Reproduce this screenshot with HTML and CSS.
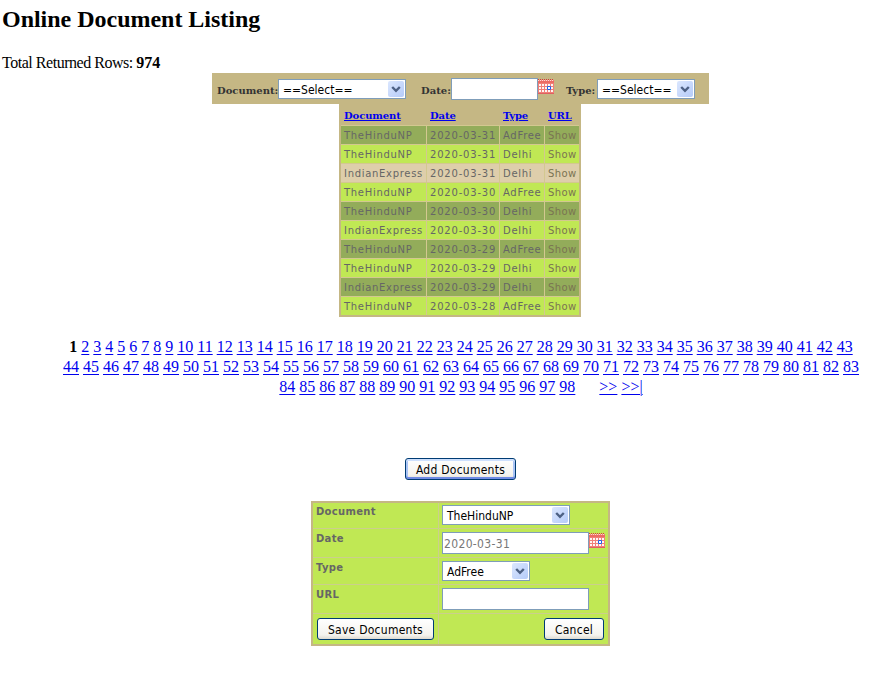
FILE: index.html
```html
<!DOCTYPE html>
<html lang="en">
<head>
<meta charset="utf-8">
<title>Online Document Listing</title>
<link rel="stylesheet" href="styles.css">
</head>
<body>
<svg width="0" height="0" class="defs" aria-hidden="true">
  <symbol id="cal" viewBox="0 0 16 16">
    <path d="M0 1h16v14H0z" fill="#f08078"/>
    <path d="M0 .5h16" stroke="#d83838" stroke-dasharray="1 1"/>
    <path d="M0 1.5h16" stroke="#ffd8d4" stroke-dasharray="1 1"/>
    <path d="M0 2h16v2H0z" fill="#ec6c64"/>
    <path d="M1 5h2v2H1zM4 5h2v2H4zM7 5h2v2H7zM10 5h2v2h-2zM13 5h2v2h-2zM1 8h2v2H1zM4 8h2v2H4zM7 8h2v2H7zM13 8h2v2h-2zM1 11h2v2H1zM4 11h2v2H4zM7 11h2v2H7zM10 11h2v2h-2zM13 11h2v2h-2z" fill="#fff6f4"/>
    <path d="M0 14h16v1H0z" fill="#e06060"/>
    <path d="M9.5 7.5h3v3h-3z" fill="#fff" stroke="#1c60e8"/>
  </symbol>
  <symbol id="arrow" viewBox="0 0 16 16">
    <path d="M4.2 6l3.8 3.8L11.8 6" fill="none" stroke="#4d6185" stroke-width="2.4"/>
  </symbol>
</svg>
<h1>Online Document Listing</h1>
<p class="total">Total Returned Rows: <b>974</b></p>

<div class="filter">
  <span class="flabel l1">Document:</span>
  <div class="select w128"><span>==Select==</span><i><svg><use href="#arrow"/></svg></i></div>
  <span class="flabel l2">Date:</span>
  <div class="input w87"></div><svg class="cal"><use href="#cal"/></svg>
  <span class="flabel l3">Type:</span>
  <div class="select w98"><span>==Select==</span><i><svg><use href="#arrow"/></svg></i></div>
</div>

<div class="list" id="list">
  <div class="head"><a>Document</a></div><div class="head"><a>Date</a></div><div class="head"><a>Type</a></div><div class="head"><a>URL</a></div>
</div>

<div class="pages" id="pages"></div>

<div class="add"><div class="button focus w111">Add Documents</div></div>

<div class="form">
  <div class="flab">Document</div>
  <div class="field"><div class="select w128"><span class="doc">TheHinduNP</span><i><svg><use href="#arrow"/></svg></i></div></div>
  <div class="flab low">Date</div>
  <div class="field"><div class="input w147">2020-03-31</div><svg class="cal"><use href="#cal"/></svg></div>
  <div class="flab low">Type</div>
  <div class="field"><div class="select w88"><span class="doc">AdFree</span><i><svg><use href="#arrow"/></svg></i></div></div>
  <div class="flab low">URL</div>
  <div class="field"><div class="input w147"></div></div>
  <div class="act"><div class="button w117">Save Documents</div></div>
  <div class="act end"><div class="button w60">Cancel</div></div>
</div>
<script src="app.js"></script>
</body>
</html>
```
FILE: styles.css
```css
* { box-sizing: border-box; }
body { margin: 0; background: #fff; color: #000; font-family: "Liberation Serif", serif; font-size: 16px; overflow: hidden; }
.defs { display: block; height: 0; }
h1 { margin: 0; padding: 5px 0 0 2px; font-size: 24px; line-height: 28px; height: 53px; letter-spacing: -0.02px; }
.total { margin: 0; padding-left: 2px; height: 20px; line-height: 20px; letter-spacing: -0.47px; }
.total b { letter-spacing: 0; }
a { color: #00e; text-decoration: underline; }

.filter { display: flex; align-items: flex-start; margin-left: 212px; width: 497px; height: 31px; padding-top: 5px; background: #c5b784; }
.flabel { font: bold 10px/12px "DejaVu Serif", serif; color: #333; margin-top: 7px; white-space: nowrap; }
.l1 { width: 66px; padding-left: 5px; }
.l2 { width: 45px; padding-left: 15px; }
.l3 { width: 43px; padding-left: 12px; }
.filter .select { margin-top: 1px; }

.select, .input { background: #fff; border: 1px solid #7f9db9; font: 12px/18px "DejaVu Sans Condensed", "DejaVu Sans", sans-serif; white-space: nowrap; }
.select { height: 20px; display: flex; justify-content: space-between; padding: 1px; line-height: 18px; }
.select span { padding-left: 3px; }
.select i { width: 16px; height: 16px; border-radius: 2px; background: linear-gradient(135deg, #dbe7fe, #b5cbf9); }
.select svg { display: block; width: 16px; height: 16px; }
.input { height: 22px; padding: 2px 1px; line-height: 18px; color: #777; letter-spacing: 0.35px; }
.cal { display: block; width: 16px; height: 16px; margin-top: 1px; }
.w128 { width: 128px; } .w87 { width: 87px; } .w98 { width: 98px; } .w88 { width: 88px; }
.w147 { width: 147px; } .w111 { width: 111px; } .w117 { width: 117px; } .w60 { width: 60px; }

.list { display: grid; grid-template-columns: 85px 72px 44px 34px; grid-template-rows: 21px; grid-auto-rows: 18px; gap: 1px; margin-left: 339px; width: 242px; height: 213px; border: solid #c5b784; border-width: 0 2px 2px; background: #d3c890; font: 10px/20px "DejaVu Sans", sans-serif; color: #666; }
.list div { padding-left: 3px; white-space: nowrap; letter-spacing: 0.7px; }
.list .head { font: bold 10px/24px "DejaVu Serif", serif; background: #c5b784; letter-spacing: -0.1px; margin-right: -1px; }
.list .head:nth-child(4) { margin-right: 0; }
.list .dark { background: #93ac5a; }
.list .lime { background: #c0e854; }
.list .tan { background: #deceab; }
.list .date { letter-spacing: 0.8px; }
.list .show { color: #7a7452; letter-spacing: 0.4px; }

.pages { margin: 20px 0 0 61px; width: 800px; line-height: 20px; text-align: center; }
.pages a { text-underline-offset: 2px; text-decoration-thickness: 1px; }
.pages .next { margin-left: 20px; }

.add { margin: 61px 0 21px 405px; }
.button { height: 22px; border: 1px solid #003c74; border-radius: 3px; background: linear-gradient(#fff, #f4f3ee 80%, #dedad0); font: 12px/22px "DejaVu Sans Condensed", "DejaVu Sans", sans-serif; letter-spacing: 0.25px; text-align: center; white-space: nowrap; }
.focus { box-shadow: inset 0 2px 0 #cee0fd, inset 0 -2px 0 #6f8be4, inset 2px 0 0 #aac4f5, inset -2px 0 0 #aac4f5; }

.form { display: grid; grid-template-columns: 125px 169px; grid-template-rows: 25px 28px 26px 28px 30px; gap: 1px; margin-left: 311px; width: 299px; height: 145px; border: 2px solid #c5b784; background: #cbcf8c; }
.form > div { background: #c0e854; }
.flab { font: bold 10px/12px "DejaVu Sans", sans-serif; color: #666; padding: 3px; letter-spacing: 0.3px; }
.flab.low { padding-top: 4px; }
.field { display: flex; align-items: flex-start; padding: 3px 0 0 3px; }
.field:nth-child(2) { padding-top: 2px; }
.act { padding: 4px; }
.end { display: flex; justify-content: flex-end; }
```
FILE: app.js
```js
const rows = [
  ["TheHinduNP", "2020-03-31", "AdFree", "dark"],
  ["TheHinduNP", "2020-03-31", "Delhi", "lime"],
  ["IndianExpress", "2020-03-31", "Delhi", "tan"],
  ["TheHinduNP", "2020-03-30", "AdFree", "lime"],
  ["TheHinduNP", "2020-03-30", "Delhi", "dark"],
  ["IndianExpress", "2020-03-30", "Delhi", "lime"],
  ["TheHinduNP", "2020-03-29", "AdFree", "dark"],
  ["TheHinduNP", "2020-03-29", "Delhi", "lime"],
  ["IndianExpress", "2020-03-29", "Delhi", "dark"],
  ["TheHinduNP", "2020-03-28", "AdFree", "lime"]
];
document.getElementById("list").insertAdjacentHTML("beforeend", rows.map(([doc, date, type, tone]) =>
  `<div class="${tone} name">${doc}</div><div class="${tone} date">${date}</div><div class="${tone} type">${type}</div><div class="${tone} show">Show</div>`
).join(""));

let pages = "<b>1</b>";
for (let n = 2; n <= 98; n++) pages += ` <a>${n}</a>`;
pages += ' <a class="next">&gt;&gt;</a> <a>&gt;&gt;|</a>';
document.getElementById("pages").innerHTML = pages;
```
